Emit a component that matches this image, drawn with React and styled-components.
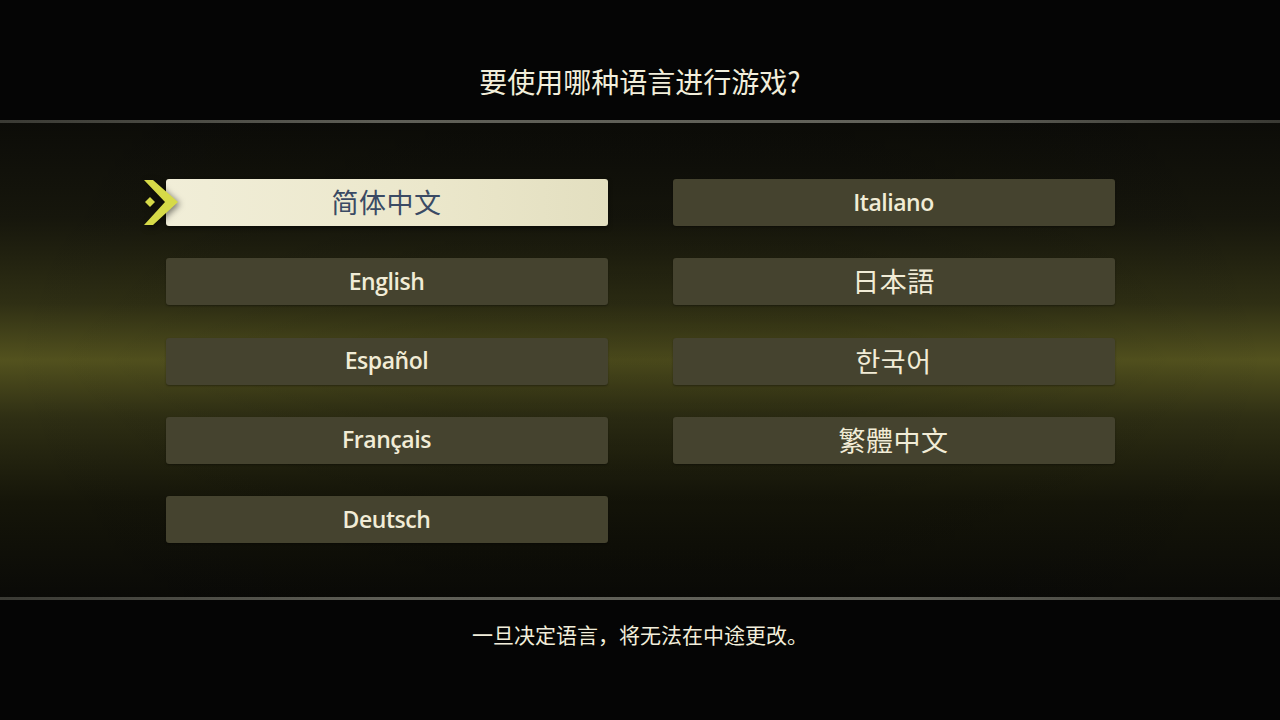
import React from 'react'
import styled, { createGlobalStyle } from 'styled-components'

const GlobalStyle = createGlobalStyle`
  html, body {
    margin: 0;
    padding: 0;
    background: #050505;
  }
  body {
    font-family: "Open Sans", "Noto Sans CJK SC", sans-serif;
  }
`

const Screen = styled.div`
  width: 1280px;
  height: 720px;
  display: flex;
  flex-direction: column;
  background: #050505;
  overflow: hidden;
`

const Band = styled.div`
  height: ${(p) => p.h}px;
  flex: none;
  display: flex;
  justify-content: center;
  background: #050505;
  color: #f2eedb;
  font-family: "Noto Sans CJK SC", sans-serif;
  font-size: ${(p) => p.fs}px;
  line-height: 1.4;
  padding-top: ${(p) => p.pt || 0}px;
  box-sizing: border-box;
`

const Rule = styled.div`
  height: 3px;
  flex: none;
  background: linear-gradient(90deg, #3a3a34 0%, #5e5e56 30%, #62625a 70%, #3a3a34 100%);
`

const Stage = styled.main`
  flex: 1;
  background:
    linear-gradient(90deg, rgba(0,0,0,0) 0%, rgba(0,0,0,0.12) 35%, rgba(0,0,0,0.12) 65%, rgba(0,0,0,0) 100%),
    linear-gradient(180deg,
      #0c0c08 0%,
      #16160c 20%,
      #2f2f14 38%,
      #53521e 50%,
      #2f2f14 62%,
      #151509 80%,
      #0a0a07 100%);
  display: flex;
  justify-content: center;
  padding-top: 56px;
  box-sizing: border-box;
`

const Grid = styled.div`
  display: grid;
  grid-template-columns: 442px 442px;
  grid-template-rows: repeat(5, 47px);
  grid-auto-flow: column;
  column-gap: 65px;
  row-gap: 32.25px;
`

const Option = styled.div`
  position: relative;
  display: flex;
  align-items: center;
  justify-content: center;
  border-radius: 3px;
  font-size: ${(p) => (p.cjk ? 27 : 23)}px;
  font-family: ${(p) =>
    p.cjk
      ? `"Noto Sans CJK ${p.cjk}", sans-serif`
      : `"Open Sans", "Noto Sans", sans-serif`};
  font-weight: ${(p) => (p.cjk ? 400 : 600)};
  letter-spacing: ${(p) => (p.cjk ? '0.02em' : '-0.02em')};
  color: ${(p) => (p.active ? '#3a4a64' : '#f1ecd6')};
  background: ${(p) =>
    p.active
      ? 'linear-gradient(90deg, #f1eed8 0%, #ebe7cb 60%, #e3dfc0 100%)'
      : '#45432f'};
  box-shadow: ${(p) =>
    p.active ? '0 2px 4px rgba(0,0,0,0.5)' : '0 1px 2px rgba(0,0,0,0.35)'};
  padding-bottom: 2px;
  box-sizing: border-box;
`

const Cursor = styled.svg`
  position: absolute;
  left: -22px;
  top: 1px;
  width: 36px;
  height: 46px;
  filter: drop-shadow(2px 2px 3px rgba(0, 0, 0, 0.5));
`

const Pointer = () => (
  <Cursor viewBox="0 0 36 46">
    <polygon points="0,0 9,0 34,22 9,45 0,45 21,22" fill="#d6da48" />
    <polygon points="6,17 11,22 6,27 1,22" fill="#d6da48" />
  </Cursor>
)

const languages = [
  { label: '简体中文', cjk: 'SC', active: true },
  { label: 'English' },
  { label: 'Español' },
  { label: 'Français' },
  { label: 'Deutsch' },
  { label: 'Italiano' },
  { label: '日本語', cjk: 'JP' },
  { label: '한국어', cjk: 'KR' },
  { label: '繁體中文', cjk: 'TC' },
]

export default function App() {
  return (
    <>
      <GlobalStyle />
      <Screen>
        <Band h={120} fs={28} pt={62}>要使用哪种语言进行游戏?</Band>
        <Rule />
        <Stage>
          <Grid>
            {languages.map((l) => (
              <Option key={l.label} active={l.active} cjk={l.cjk}>
                {l.active && <Pointer />}
                {l.label}
              </Option>
            ))}
          </Grid>
        </Stage>
        <Rule />
        <Band h={120} fs={21} pt={20}>一旦决定语言，将无法在中途更改。</Band>
      </Screen>
    </>
  )
}
